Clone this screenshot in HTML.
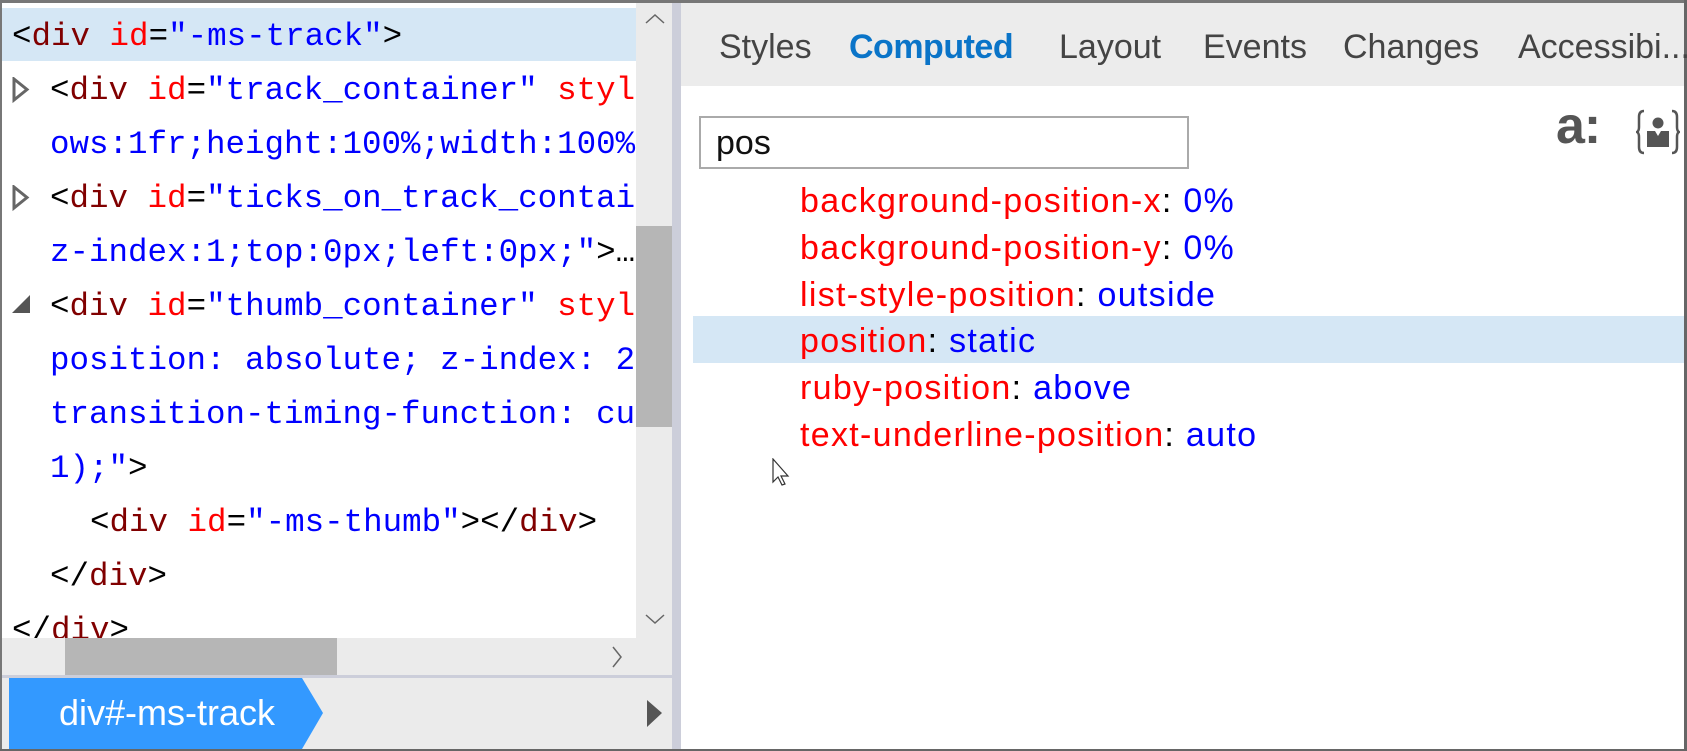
<!DOCTYPE html>
<html><head><meta charset="utf-8"><style>
*{margin:0;padding:0;box-sizing:border-box}
body{width:1687px;height:751px;overflow:hidden;background:#fff;position:relative;font-family:"Liberation Sans",sans-serif}
.abs{position:absolute}
.code{font-family:"Liberation Mono",monospace;font-size:32.5px;white-space:pre;line-height:54px;position:absolute}
.t{color:#800000}.a{color:#f00}.v{color:#00f}.p{color:#000}
.tab{position:absolute;top:28px;font-size:34px;color:#444;font-family:"Liberation Sans",sans-serif;letter-spacing:0px}
.prop{position:absolute;left:800px;font-size:34px;line-height:47px;white-space:pre;letter-spacing:1.3px}
</style></head><body>
<div class="abs" style="left:0;top:0;width:1687px;height:3px;background:#777"></div>
<div class="abs" style="left:0;top:0;width:2px;height:751px;background:#777"></div>
<div class="abs" style="right:0;top:0;width:3px;height:751px;background:#666"></div>
<div class="abs" style="left:0;bottom:0;width:1687px;height:2px;background:#666"></div>

<div class="abs" style="left:2px;top:3px;width:634px;height:635px;overflow:hidden">
 <div class="abs" style="left:0;top:5px;width:634px;height:53px;background:#d5e7f5"></div>
 <div class="code" style="left:10px;top:7px"><span class="p">&lt;</span><span class="t">div</span> <span class="a">id</span><span class="p">=</span><span class="v">"-ms-track"</span><span class="p">&gt;</span></div>
 <div class="code" style="left:48px;top:61px"><span class="p">&lt;</span><span class="t">div</span> <span class="a">id</span><span class="p">=</span><span class="v">"track_container"</span> <span class="a">style</span></div>
 <div class="code" style="left:48px;top:115px"><span class="v">ows:1fr;height:100%;width:100%</span></div>
 <div class="code" style="left:48px;top:169px"><span class="p">&lt;</span><span class="t">div</span> <span class="a">id</span><span class="p">=</span><span class="v">"ticks_on_track_contai</span></div>
 <div class="code" style="left:48px;top:223px"><span class="v">z-index:1;top:0px;left:0px;</span><span class="v">"</span><span class="p">&gt;…</span></div>
 <div class="code" style="left:48px;top:277px"><span class="p">&lt;</span><span class="t">div</span> <span class="a">id</span><span class="p">=</span><span class="v">"thumb_container"</span> <span class="a">style</span></div>
 <div class="code" style="left:48px;top:331px"><span class="v">position: absolute; z-index: 2</span></div>
 <div class="code" style="left:48px;top:385px"><span class="v">transition-timing-function: cu</span></div>
 <div class="code" style="left:48px;top:439px"><span class="v">1);"</span><span class="p">&gt;</span></div>
 <div class="code" style="left:88px;top:493px"><span class="p">&lt;</span><span class="t">div</span> <span class="a">id</span><span class="p">=</span><span class="v">"-ms-thumb"</span><span class="p">&gt;&lt;/</span><span class="t">div</span><span class="p">&gt;</span></div>
 <div class="code" style="left:48px;top:547px"><span class="p">&lt;/</span><span class="t">div</span><span class="p">&gt;</span></div>
 <div class="code" style="left:10px;top:601px"><span class="p">&lt;/</span><span class="t">div</span><span class="p">&gt;</span></div>
 <svg class="abs" style="left:10px;top:74px" width="18" height="28"><path d="M2 2 L15 12.5 L2 23 Z" fill="none" stroke="#666" stroke-width="3"/></svg>
 <svg class="abs" style="left:10px;top:182px" width="18" height="28"><path d="M2 2 L15 12.5 L2 23 Z" fill="none" stroke="#666" stroke-width="3"/></svg>
 <svg class="abs" style="left:8px;top:290px" width="22" height="22"><path d="M20 2 L20 20 L2 20 Z" fill="#555"/></svg>
</div>
<div class="abs" style="left:636px;top:3px;width:36px;height:672px;background:#ebebeb"></div>
<div class="abs" style="left:636px;top:226px;width:36px;height:201px;background:#b6b6b6"></div>
<svg class="abs" style="left:644px;top:12px" width="22" height="14"><path d="M2 11 L11 3 L20 11" fill="none" stroke="#666" stroke-width="1.5"/></svg>
<svg class="abs" style="left:644px;top:612px" width="22" height="14"><path d="M2 3 L11 11 L20 3" fill="none" stroke="#666" stroke-width="1.5"/></svg>
<div class="abs" style="left:2px;top:638px;width:670px;height:37px;background:#ebebeb"></div>
<div class="abs" style="left:65px;top:638px;width:272px;height:37px;background:#b6b6b6"></div>
<svg class="abs" style="left:610px;top:645px" width="14" height="24"><path d="M3 2 L11 12 L3 22" fill="none" stroke="#666" stroke-width="1.5"/></svg>
<div class="abs" style="left:2px;top:675px;width:670px;height:3px;background:#ccceda"></div>
<div class="abs" style="left:2px;top:678px;width:670px;height:71px;background:#ebebeb"></div>
<svg class="abs" style="left:9px;top:678px" width="320" height="71"><path d="M0 0 L293 0 L314 35 L293 71 L0 71 Z" fill="#3399ff"/></svg>
<div class="abs" style="left:59px;top:692px;font-size:36px;color:#fff;letter-spacing:0px">div#-ms-track</div>
<svg class="abs" style="left:646px;top:699px" width="18" height="30"><path d="M1 1 L16 14 L1 28 Z" fill="#555"/></svg>
<div class="abs" style="left:672px;top:3px;width:9px;height:746px;background:#ccceda"></div>

<div class="abs" style="left:681px;top:3px;width:1003px;height:83px;background:#ececec"></div>
<div class="tab" style="left:719px">Styles</div>
<div class="tab" style="left:849px;color:#0a74c8;font-weight:bold;letter-spacing:-0.5px">Computed</div>
<div class="tab" style="left:1059px">Layout</div>
<div class="tab" style="left:1203px">Events</div>
<div class="tab" style="left:1343px">Changes</div>
<div class="tab" style="left:1518px">Accessibi...</div>

<div class="abs" style="left:699px;top:116px;width:490px;height:53px;border:2px solid #aaa;background:#fff"></div>
<div class="abs" style="left:716px;top:124px;font-size:34px;color:#111">pos</div>
<div class="abs" style="left:1556px;top:96px;font-size:52px;color:#555;font-weight:bold;letter-spacing:-1px">a:</div>
<svg class="abs" style="left:1636px;top:108px" width="44" height="48"><path d="M8 3 Q3 3 3 9 L3 19 Q3 23 1 24 Q3 25 3 29 L3 39 Q3 45 8 45" fill="none" stroke="#555" stroke-width="2.5"/><path d="M36 3 Q41 3 41 9 L41 19 Q41 23 43 24 Q41 25 41 29 L41 39 Q41 45 36 45" fill="none" stroke="#555" stroke-width="2.5"/><circle cx="22" cy="15" r="5.5" fill="#555"/><path d="M11 23 L19 23 L22 28 L25 23 L33 23 L33 39 L11 39 Z" fill="#555"/></svg>

<div class="abs" style="left:693px;top:316px;width:991px;height:47px;background:#d5e7f5"></div>
<div class="prop" style="top:178px"><span class="a">background-position-x</span><span class="p">: </span><span class="v">0%</span></div>
<div class="prop" style="top:225px"><span class="a">background-position-y</span><span class="p">: </span><span class="v">0%</span></div>
<div class="prop" style="top:272px"><span class="a">list-style-position</span><span class="p">: </span><span class="v">outside</span></div>
<div class="prop" style="top:318px"><span class="a">position</span><span class="p">: </span><span class="v">static</span></div>
<div class="prop" style="top:365px"><span class="a">ruby-position</span><span class="p">: </span><span class="v">above</span></div>
<div class="prop" style="top:412px"><span class="a">text-underline-position</span><span class="p">: </span><span class="v">auto</span></div>
<svg class="abs" style="left:772px;top:458px" width="20" height="28"><path d="M1 1 L1 24 L6 19 L10 27 L13 26 L9 18 L16 18 Z" fill="#fff" stroke="#333" stroke-width="1.2"/></svg>
</body></html>
